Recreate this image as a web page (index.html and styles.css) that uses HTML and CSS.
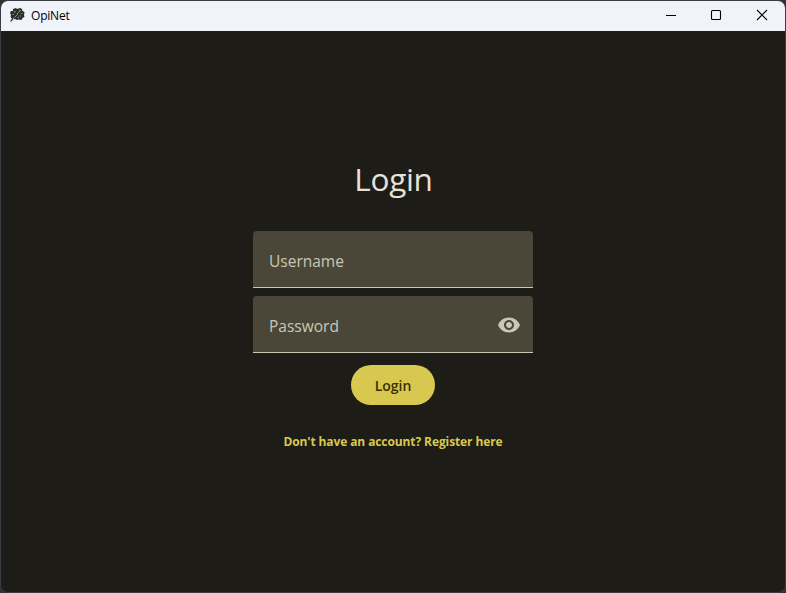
FILE: index.html
```html
<!DOCTYPE html>
<html lang="en">
<head>
<meta charset="utf-8">
<title>OpiNet</title>
<link rel="stylesheet" href="styles.css">
</head>
<body>
<div class="window">
  <header class="titlebar">
    <svg class="app-icon" width="16" height="16" viewBox="0 0 16 16">
      <path fill="#2b2d2f" d="M4 2l3-1 1 1 3-1 2 1 .5 2 2 1-.5 3 .5 2-2 1-1 2-3-.5L8 13l-2-1H4.500l-2 2.500H1L3 11.500 1.500 10 2 8 1 6l1-2h2z"/>
      <path fill="#65a94e" d="M10 3h2v1h-1v1h-1zM5 4h1.500v1.500H5zM9 5h1v1H9zM8 6h1v2H8zM12 6h1.500v1H12zM3.500 7h1.500v1H3.500zM7 8h1v1H7zM10.500 8.500H12v1h-1.500zM6 9h1v1H6zM5 10h1v1H5zM8.500 10H10v1H8.500zM4 11h1v1H4z"/>
    </svg>
    <span class="app-name">OpiNet</span>
    <div class="controls">
      <svg width="46" height="30" viewBox="0 0 46 30"><path d="M18 14.500h10"/></svg>
      <svg width="46" height="30" viewBox="0 0 46 30"><rect x="17.500" y="9.500" width="9" height="9" rx="1"/></svg>
      <svg width="46" height="30" viewBox="0 0 46 30"><path d="M17 9l10 10M27 9l-10 10"/></svg>
    </div>
  </header>
  <main class="login">
    <h1 class="heading">Login</h1>
    <div class="field"><span class="username">Username</span></div>
    <div class="field">
      <span class="password">Password</span>
      <svg class="eye" width="24" height="24" viewBox="0 0 24 24"><path d="M12 4.500C7 4.500 2.730 7.610 1 12c1.730 4.390 6 7.500 11 7.500s9.270-3.110 11-7.500c-1.730-4.390-6-7.500-11-7.500zM12 17c-2.760 0-5-2.240-5-5s2.240-5 5-5 5 2.240 5 5-2.240 5-5 5zm0-8c-1.660 0-3 1.340-3 3s1.340 3 3 3 3-1.340 3-3-1.340-3-3-3z"/></svg>
    </div>
    <button class="submit">Login</button>
    <a class="register">Don't have an account? Register here</a>
  </main>
</div>
</body>
</html>
```
FILE: styles.css
```css
* { box-sizing: border-box; }
body {
  margin: 0;
  background: #303136;
  font-family: "Open Sans", "Noto Sans", sans-serif;
}
.window {
  width: 786px;
  height: 593px;
  border: 1px solid #3b3d40;
  border-radius: 8px;
  background: #1d1c17;
  overflow: hidden;
}
.titlebar {
  display: flex;
  align-items: center;
  height: 30px;
  padding-left: 8px;
  background: #f0f3fa;
  color: #000;
}
.app-icon { margin-bottom: 2px; }
.app-name {
  margin: 0 0 2px 6px;
  font-size: 12px;
  letter-spacing: -0.2px;
}
.controls {
  display: flex;
  margin: 0 -1px 0 auto;
}
.controls svg {
  fill: none;
  stroke: #000;
  stroke-width: 1.1;
}
.login {
  display: flex;
  flex-direction: column;
  align-items: center;
  padding-top: 128px;
}
.heading {
  margin: 0 0 32px;
  padding-left: 1px;
  color: #e7e2d9;
  font-size: 31.5px;
  font-weight: 400;
  line-height: 40px;
  letter-spacing: -0.3px;
}
.field {
  display: flex;
  align-items: center;
  justify-content: space-between;
  width: 280px;
  height: 57px;
  margin-bottom: 8px;
  padding: 3px 12px 0 16px;
  border-bottom: 1px solid #cbc7b5;
  border-radius: 4px 4px 0 0;
  background: #4a4738;
  color: #cbc7b5;
  font-size: 15.5px;
}
.eye { fill: #cbc7b5; margin-bottom: 1px; }
.submit {
  width: 84px;
  height: 40px;
  margin-top: 4px;
  padding: 1px 0 0;
  border: 0;
  border-radius: 20px;
  background: #d9c84f;
  color: #373100;
  font: 600 14px "Open Sans", sans-serif;
}
.register {
  margin-top: 28px;
  color: #d9c84f;
  font-size: 12px;
  font-weight: 700;
  line-height: 17px;
  letter-spacing: -0.1px;
  white-space: nowrap;
}
```
